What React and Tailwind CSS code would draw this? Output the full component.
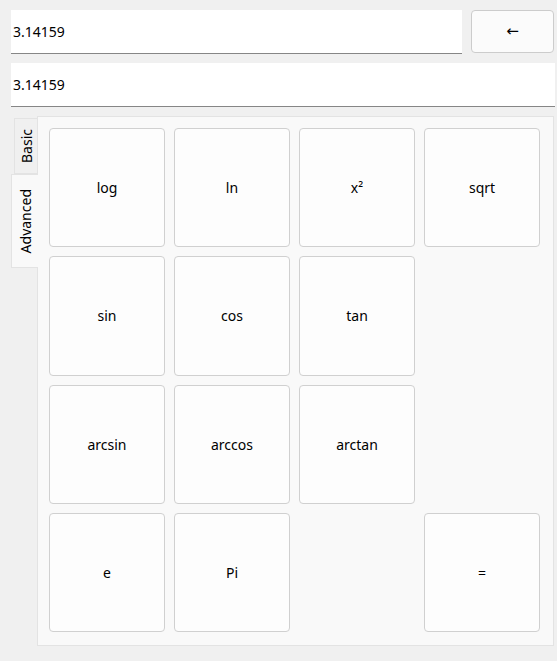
import { useState } from 'react';

const advancedKeys = [
  ['log', 'ln', 'x²', 'sqrt'],
  ['sin', 'cos', 'tan', null],
  ['arcsin', 'arccos', 'arctan', null],
  ['e', 'Pi', null, '='],
];

function Key({ label, onPress }) {
  if (!label) return <div />;
  return (
    <button
      type="button"
      onClick={() => onPress(label)}
      className="rounded-[4px] border border-[#d0d0d0] bg-[#fdfdfd] text-[14px] text-black hover:bg-[#f5f5f5]"
    >
      {label}
    </button>
  );
}

function Tab({ label, active, onClick }) {
  return (
    <button
      type="button"
      onClick={onClick}
      className={
        active
          ? 'relative z-10 -mr-px flex h-[94px] w-[27px] items-center justify-center border border-r-0 border-[#e3e3e3] bg-[#f9f9f9]'
          : 'ml-[3px] mt-px flex h-[56px] w-[24px] items-center justify-center border border-r-0 border-[#e3e3e3] bg-[#f0f0f0]'
      }
    >
      <span className="rotate-180 text-[14px] text-black [writing-mode:vertical-rl]">{label}</span>
    </button>
  );
}

export default function App() {
  const [display, setDisplay] = useState('3.14159');
  const [tab, setTab] = useState('Advanced');

  return (
    <div className="h-[661px] w-[557px] bg-[#f0f0f0] font-['Noto_Sans',sans-serif] text-black">
      <div className="flex gap-[9px] pl-[11px] pr-[3px] pt-[10px]">
        <input
          value={display}
          onChange={(e) => setDisplay(e.target.value)}
          className="h-[44px] min-w-0 flex-1 border-b border-[#868686] bg-white px-[2px] text-[14px] outline-none"
        />
        <button
          type="button"
          onClick={() => setDisplay((d) => d.slice(0, -1))}
          className="h-[43px] w-[83px] rounded-[4px] border border-[#cccccc] bg-[#fbfbfb] font-['DejaVu_Sans',sans-serif] text-[15px] leading-none"
        >
          ←
        </button>
      </div>

      <div className="mt-[9px] ml-[11px] mr-[2px]">
        <input
          value={display}
          readOnly
          className="h-[44px] w-full border-b border-[#868686] bg-white px-[2px] text-[14px] outline-none"
        />
      </div>

      <div className="mt-[9px] flex pl-[11px]">
        <div className="flex w-[26px] flex-col pt-px">
          <Tab label="Basic" active={tab === 'Basic'} onClick={() => setTab('Basic')} />
          <Tab label="Advanced" active={tab === 'Advanced'} onClick={() => setTab('Advanced')} />
        </div>
        <div className="h-[530px] w-[517px] border border-[#e3e3e3] bg-[#f9f9f9] pb-[13px] pl-[11px] pr-[13px] pt-[11px]">
          <div className="grid h-full grid-cols-4 grid-rows-4 gap-[9px]">
            {advancedKeys.flat().map((k, i) => (
              <Key key={i} label={k} onPress={(v) => setDisplay(v)} />
            ))}
          </div>
        </div>
      </div>
    </div>
  );
}
